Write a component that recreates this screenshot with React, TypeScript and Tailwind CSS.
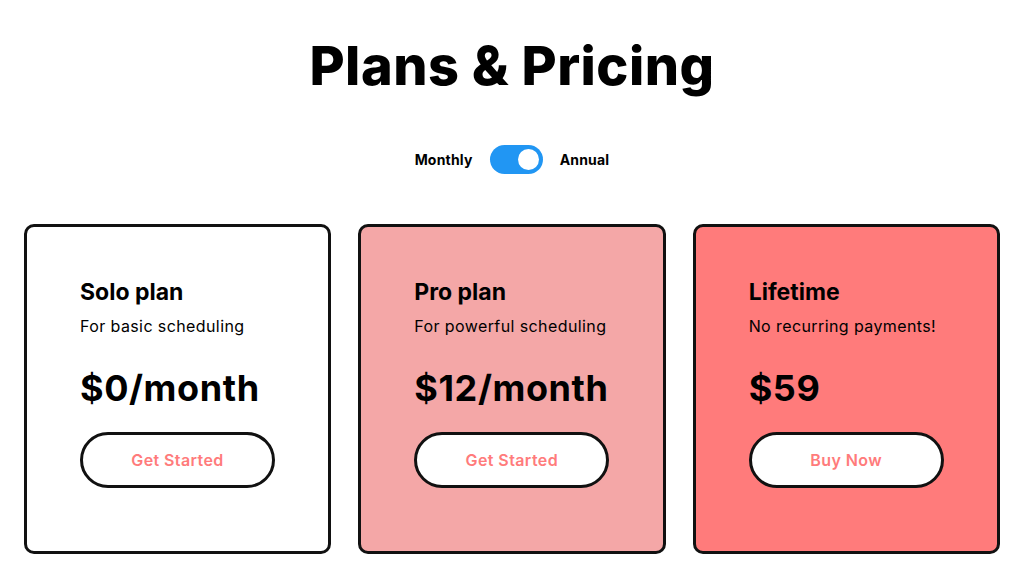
import React from "react";

const plans = [
  { name: "Solo plan", desc: "For basic scheduling", price: "$0/month", cta: "Get Started", bg: "bg-white" },
  { name: "Pro plan", desc: "For powerful scheduling", price: "$12/month", cta: "Get Started", bg: "bg-[#f4a7a7]" },
  { name: "Lifetime", desc: "No recurring payments!", price: "$59", cta: "Buy Now", bg: "bg-[#ff7b7b]" },
];

export default function App() {
  return (
    <div className="w-[1024px] h-[577px] bg-white flex flex-col items-center font-['Inter',sans-serif] text-black overflow-hidden">
      <h1 className="mt-[34px] text-[54px] leading-[64px] font-extrabold tracking-[0.5px]">Plans &amp; Pricing</h1>
      <div className="mt-[47px] flex items-center gap-[17px]">
        <span className="text-[14px] font-bold tracking-[0.2px]">Monthly</span>
        <div className="w-[53px] h-[29px] rounded-full bg-[#2196f3] flex items-center justify-end px-[4px]">
          <div className="w-[21px] h-[21px] rounded-full bg-white" />
        </div>
        <span className="text-[14px] font-bold tracking-[0.2px]">Annual</span>
      </div>
      <div className="mt-[50px] w-full px-[24px] grid grid-cols-3 gap-[27px]">
        {plans.map((p) => (
          <div key={p.name} className={`${p.bg} h-[330px] rounded-[10px] border-[3px] border-[#111] pt-[50px] pl-[53px]`}>
            <div className="text-[23px] leading-[30px] font-bold">{p.name}</div>
            <div className="mt-[8px] text-[16px] leading-[22px] tracking-[0.4px]">{p.desc}</div>
            <div className="mt-[29px] text-[36px] leading-[44px] font-bold tracking-[0.6px]">{p.price}</div>
            <button className="mt-[22px] w-[195px] h-[56px] rounded-full border-[3px] border-[#111] bg-white text-[#ff7b7b] text-[16px] font-semibold tracking-[0.4px]">
              {p.cta}
            </button>
          </div>
        ))}
      </div>
    </div>
  );
}
